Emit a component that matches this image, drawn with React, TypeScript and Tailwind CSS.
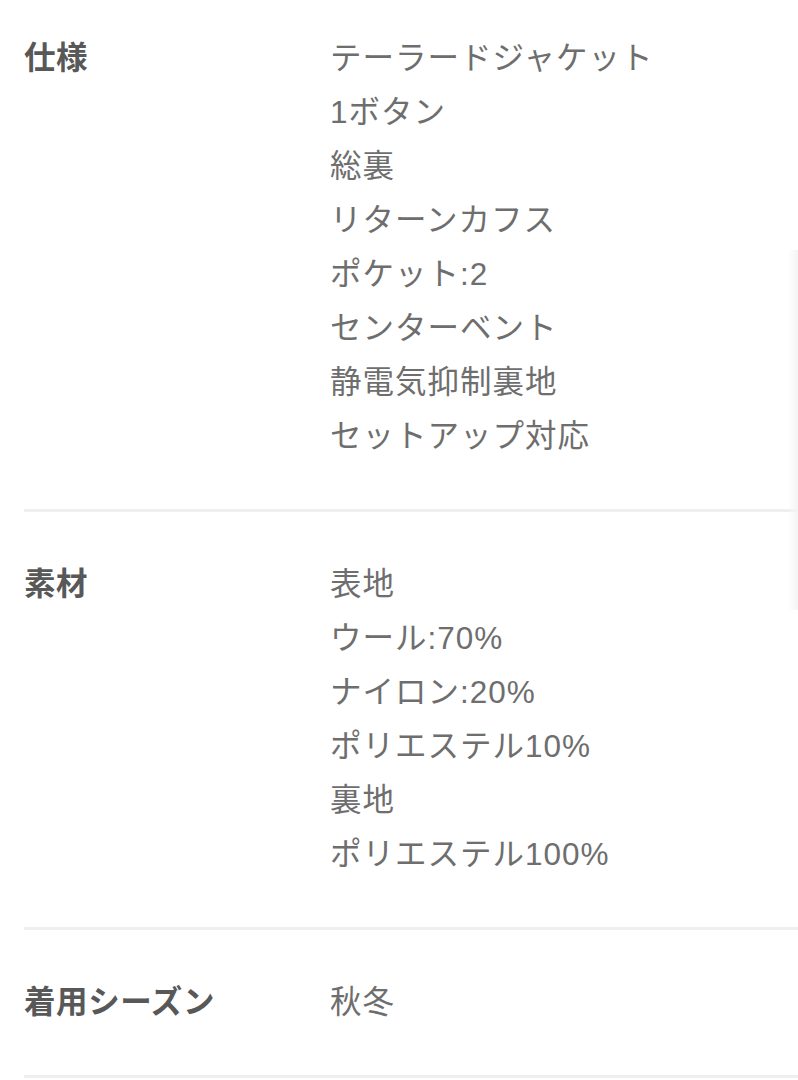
import React from 'react';

const rows = [
  {
    label: '仕様',
    values: [
      'テーラードジャケット',
      '1ボタン',
      '総裏',
      'リターンカフス',
      'ポケット:2',
      'センターベント',
      '静電気抑制裏地',
      'セットアップ対応',
    ],
  },
  {
    label: '素材',
    values: ['表地', 'ウール:70%', 'ナイロン:20%', 'ポリエステル10%', '裏地', 'ポリエステル100%'],
  },
  { label: '着用シーズン', values: ['秋冬'] },
];

const App = () => {
  return (
    <div
      className="relative w-[798px] h-[1080px] overflow-hidden bg-white pl-6"
      style={{ fontFamily: '"Liberation Sans", "Noto Sans CJK JP", sans-serif' }}
    >
      <div className="-mt-[14px]">
        {rows.map((row) => (
          <div key={row.label} className="flex pt-[45px] pb-[46px] border-b-[3px] border-[#efefef]">
            <div className="w-[306px] shrink-0 text-[31.5px] leading-[54px] font-bold text-[#585858] tracking-[0.6px]">
              {row.label}
            </div>
            <div className="flex flex-col text-[31.5px] leading-[54px] text-[#6e6e6e] tracking-[1px]">
              {row.values.map((v) => (
                <div key={v}>{v}</div>
              ))}
            </div>
          </div>
        ))}
      </div>
      <div className="absolute right-0 top-[250px] h-[360px] w-[10px] bg-gradient-to-r from-transparent to-[#f4f4f4]" />
    </div>
  );
};

export default App;
